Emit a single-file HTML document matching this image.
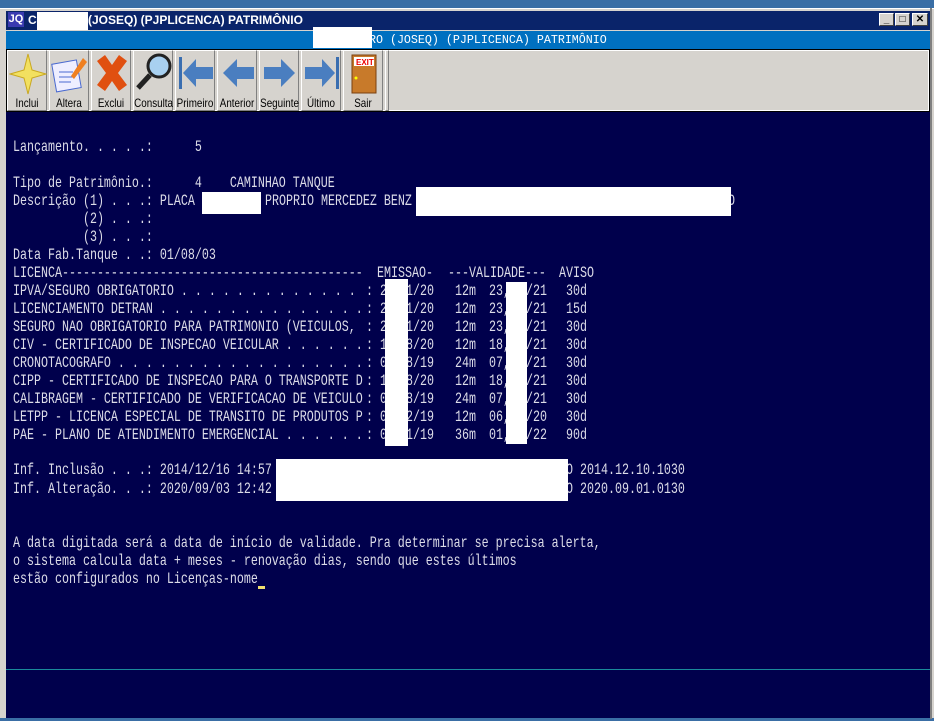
<!DOCTYPE html>
<html><head><meta charset="utf-8"><style>
*{margin:0;padding:0;box-sizing:border-box}
body{width:934px;height:721px;background:#3a6ea5;position:relative;overflow:hidden;font-family:"Liberation Sans",sans-serif}
.a{position:absolute}
.t,.r span{position:absolute;left:13px;white-space:pre;font-family:"Liberation Mono",monospace;font-size:11.67px;color:#dcdce8;transform:scaleY(1.35);transform-origin:0 50%;line-height:14px}
.r{position:absolute;left:0;width:934px;height:14px}
.r span{top:0}
.r span:nth-child(1){left:13px}
.r span:nth-child(2){left:366px}
.r span:nth-child(3){left:406px}
.r span:nth-child(4){left:455px}
.r span:nth-child(5){left:489px}
.r span:nth-child(6){left:526px}
.r span:nth-child(7){left:566px}
.w{position:absolute;background:#fff}
.btn{position:absolute;top:50px;width:40px;height:61px;background:#d6d3ce;border-top:1px solid #fff;border-left:1px solid #fff;border-right:1px solid #808080;border-bottom:1px solid #808080}
.btn span{position:absolute;bottom:0;left:-4px;right:-4px;text-align:center;font-size:12px;color:#000;transform:scaleX(.82)}
.btn svg{position:absolute;left:1px;top:1px}
.cb{position:absolute;top:13px;width:15px;height:13px;background:#d6d3ce;border-top:1px solid #fff;border-left:1px solid #fff;border-right:1px solid #404040;border-bottom:1px solid #404040;font:bold 10px "Liberation Sans";text-align:center;line-height:11px}
</style></head><body>
<div class="a" style="left:0;top:8px;width:934px;height:713px;background:#d6d3ce;border-top:1px solid #fff"></div>
<div class="a" style="left:0;top:718px;width:934px;height:3px;background:#3a6ea5"></div>
<div class="a" style="left:930px;top:8px;width:2px;height:711px;background:#808080"></div>
<div class="a" style="left:6px;top:11px;width:924px;height:19px;background:#0a246a"></div>
<div class="a" style="left:8px;top:12px;width:16px;height:15px;background:#3a3ab0;color:#fff;font:bold 11px 'Liberation Sans';line-height:15px;text-align:center">JQ</div>
<div class="a" style="left:28px;top:12px;color:#fff;font:bold 12px 'Liberation Sans';line-height:17px">C</div>
<div class="a" style="left:88px;top:12px;color:#fff;font:bold 12px 'Liberation Sans';line-height:17px;white-space:pre">(JOSEQ) (PJPLICENCA) PATRIMÔNIO</div>
<div class="cb" style="left:879px">_</div><div class="cb" style="left:895px">□</div><div class="cb" style="left:912px;width:16px">✕</div>
<div class="a" style="left:6px;top:31px;width:924px;height:18px;background:#0070c0"></div>
<div class="a" style="left:313px;top:31px;white-space:pre;color:#fff;font-family:'Liberation Mono',monospace;font-size:11.67px;line-height:18px">        RO (JOSEQ) (PJPLICENCA) PATRIMÔNIO</div>
<div class="w" style="left:313px;top:27px;width:59px;height:21px"></div>
<div class="w" style="left:37px;top:12px;width:51px;height:18px"></div>
<div class="a" style="left:6px;top:49px;width:924px;height:63px;background:#d6d3ce;border:1px solid #000"></div>
<div class="a" style="left:7px;top:50px;width:922px;height:61px;border:1px solid #fff"></div>

<div class="btn" style="left:7px"><svg width="38" height="44"><path d="M19 2 L23 18 L37 22 L23 26 L19 42 L15 26 L1 22 L15 18Z" fill="#f2e060" stroke="#c9a820"/></svg><span>Inclui</span></div>
<div class="btn" style="left:49px"><svg width="38" height="44"><rect x="3" y="10" width="25" height="28" fill="#eef" stroke="#4a6ad0" transform="rotate(-10 15 24)"/><path d="M8 20h14M8 25h14M8 30h12" stroke="#4a6ad0"/><path d="M20 24 L32 6 L36 10 L23 27Z" fill="#f08020"/></svg><span>Altera</span></div>
<div class="btn" style="left:91px"><svg width="38" height="44"><path d="M4 9 L12 3 L19 13 L26 3 L34 9 L25 21 L34 33 L26 39 L19 29 L12 39 L4 33 L13 21Z" fill="#e05010"/></svg><span>Exclui</span></div>
<div class="btn" style="left:133px"><svg width="38" height="44"><circle cx="24" cy="14" r="11" fill="#a8d0f0" stroke="#222" stroke-width="3"/><path d="M15 23 L3 36" stroke="#222" stroke-width="5"/></svg><span>Consulta</span></div>
<div class="btn" style="left:175px"><svg width="38" height="44"><rect x="2" y="5" width="3" height="32" fill="#3a6eb0"/><path d="M6 21 L19 7 V15 H36 V27 H19 V35Z" fill="#4a7ec0"/></svg><span>Primeiro</span></div>
<div class="btn" style="left:217px"><svg width="38" height="44"><path d="M4 21 L18 7 V15 H35 V27 H18 V35Z" fill="#4a7ec0"/></svg><span>Anterior</span></div>
<div class="btn" style="left:259px"><svg width="38" height="44"><path d="M34 21 L20 7 V15 H3 V27 H20 V35Z" fill="#4a7ec0"/></svg><span>Seguinte</span></div>
<div class="btn" style="left:301px"><svg width="38" height="44"><rect x="33" y="5" width="3" height="32" fill="#3a6eb0"/><path d="M32 21 L19 7 V15 H2 V27 H19 V35Z" fill="#4a7ec0"/></svg><span>Último</span></div>
<div class="btn" style="left:343px"><svg width="38" height="44"><rect x="7" y="3" width="24" height="38" fill="#c87a2a" stroke="#7a4010"/><rect x="9" y="5" width="20" height="9" fill="#fff"/><text x="11" y="13" font-size="8" font-weight="bold" fill="#e00" font-family="Liberation Sans">EXIT</text><circle cx="11" cy="26" r="1.5" fill="#ff0"/></svg><span>Sair</span></div>
<div class="btn" style="left:385px;width:4px"></div>

<div class="a" style="left:6px;top:112px;width:924px;height:606px;background:#00004c"></div>
<div class="a" style="left:6px;top:669px;width:924px;height:1px;background:#1a8a9a"></div>

<div class="t" style="top:140px">Lançamento. . . . .:      5</div>
<div class="t" style="top:176px">Tipo de Patrimônio.:      4    CAMINHAO TANQUE</div>
<div class="t" style="top:194px">Descrição (1) . . .: PLACA</div>
<div class="t" style="top:194px;left:265px">PROPRIO MERCEDEZ BENZ</div>
<div class="t" style="top:194px;left:728px">O</div>
<div class="t" style="top:212px">          (2) . . .:</div>
<div class="t" style="top:230px">          (3) . . .:</div>
<div class="t" style="top:248px">Data Fab.Tanque . .: 01/08/03</div>
<div class="t" style="top:266px">LICENCA-------------------------------------------</div>
<div class="t" style="top:266px;left:377px">EMISSAO-</div>
<div class="t" style="top:266px;left:448px">---VALIDADE---</div>
<div class="t" style="top:266px;left:559px">AVISO</div>

<div class="r" style="top:284px"><span>IPVA/SEGURO OBRIGATORIO . . . . . . . . . . . . .</span><span>: 2</span><span>1/20</span><span>12m</span><span>23,</span><span>/21</span><span>30d</span></div>
<div class="r" style="top:302px"><span>LICENCIAMENTO DETRAN . . . . . . . . . . . . . . .</span><span>: 2</span><span>1/20</span><span>12m</span><span>23,</span><span>/21</span><span>15d</span></div>
<div class="r" style="top:320px"><span>SEGURO NAO OBRIGATORIO PARA PATRIMONIO (VEICULOS,</span><span>: 2</span><span>1/20</span><span>12m</span><span>23,</span><span>/21</span><span>30d</span></div>
<div class="r" style="top:338px"><span>CIV - CERTIFICADO DE INSPECAO VEICULAR . . . . . .</span><span>: 1</span><span>8/20</span><span>12m</span><span>18,</span><span>/21</span><span>30d</span></div>
<div class="r" style="top:356px"><span>CRONOTACOGRAFO . . . . . . . . . . . . . . . . . .</span><span>: 0</span><span>8/19</span><span>24m</span><span>07,</span><span>/21</span><span>30d</span></div>
<div class="r" style="top:374px"><span>CIPP - CERTIFICADO DE INSPECAO PARA O TRANSPORTE D</span><span>: 1</span><span>8/20</span><span>12m</span><span>18,</span><span>/21</span><span>30d</span></div>
<div class="r" style="top:392px"><span>CALIBRAGEM - CERTIFICADO DE VERIFICACAO DE VEICULO</span><span>: 0</span><span>8/19</span><span>24m</span><span>07,</span><span>/21</span><span>30d</span></div>
<div class="r" style="top:410px"><span>LETPP - LICENCA ESPECIAL DE TRANSITO DE PRODUTOS P</span><span>: 0</span><span>2/19</span><span>12m</span><span>06,</span><span>/20</span><span>30d</span></div>
<div class="r" style="top:428px"><span>PAE - PLANO DE ATENDIMENTO EMERGENCIAL . . . . . .</span><span>: 0</span><span>1/19</span><span>36m</span><span>01,</span><span>/22</span><span>90d</span></div>

<div class="t" style="top:463px">Inf. Inclusão . . .: 2014/12/16 14:57</div>
<div class="t" style="top:482px">Inf. Alteração. . .: 2020/09/03 12:42</div>
<div class="t" style="top:463px;left:566px">O 2014.12.10.1030</div>
<div class="t" style="top:482px;left:566px">O 2020.09.01.0130</div>
<div class="t" style="top:536px">A data digitada será a data de início de validade. Pra determinar se precisa alerta,</div>
<div class="t" style="top:554px">o sistema calcula data + meses - renovação dias, sendo que estes últimos</div>
<div class="t" style="top:572px">estão configurados no Licenças-nome</div>
<div class="a" style="left:258px;top:586px;width:7px;height:3px;background:#f0e070"></div>

<div class="w" style="left:202px;top:192px;width:59px;height:22px"></div>
<div class="w" style="left:416px;top:187px;width:315px;height:29px"></div>
<div class="w" style="left:385px;top:279px;width:23px;height:167px"></div>
<div class="w" style="left:506px;top:282px;width:21px;height:162px"></div>
<div class="w" style="left:276px;top:459px;width:292px;height:42px"></div>
</body></html>
